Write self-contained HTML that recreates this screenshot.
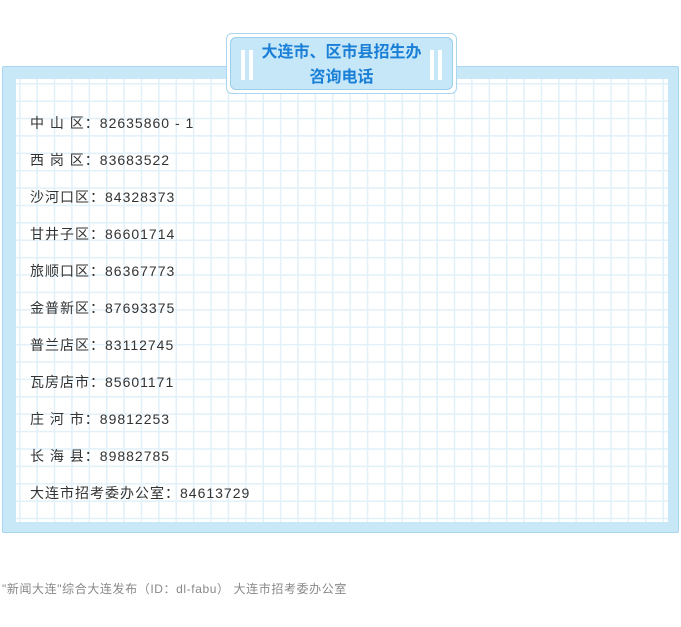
<!DOCTYPE html>
<html><head><meta charset="utf-8"><style>
body{margin:0;width:681px;height:627px;background:#fff;position:relative;font-family:"Liberation Sans","Noto Sans CJK SC",sans-serif;overflow:hidden}
.outer{position:absolute;left:2px;top:66px;width:675px;height:465px;background:#c8e8f8;border:1px solid #a9d6ee;border-radius:2px}
.grid{position:absolute;left:13px;top:12px;width:652px;height:443px;background-color:#fff;
background-image:linear-gradient(to right,#e1f0f9 1.5px,transparent 1.5px),linear-gradient(to bottom,#e1f0f9 1.5px,transparent 1.5px);
background-size:17.4px 17.4px;background-position:3px 4px}
.t1{position:absolute;left:226px;top:33px;width:229px;height:59px;border:1px solid #a9d6ee;border-radius:6px;background:#fff}
.t2{position:absolute;left:230px;top:37px;width:223px;height:53px;border:1px solid #9ccfe9;border-radius:6px;background:#c5e7f8;box-sizing:border-box;text-align:center;color:#1a7fd6;font-weight:bold;font-size:16px;line-height:25px;padding-top:2px}
.bar{position:absolute;top:12px;width:4px;height:30px;background:#fff}
.line{position:absolute;left:30px;font-size:14px;color:#333;letter-spacing:1px}
.foot{position:absolute;left:2px;top:580px;font-size:12px;color:#888;letter-spacing:0.6px}
</style></head><body>
<div class="outer"><div class="grid"></div></div>
<div class="t1"></div>
<div class="t2">大连市、区市县招生办<br>咨询电话
<div class="bar" style="left:10px"></div><div class="bar" style="left:18px"></div>
<div class="bar" style="right:10px"></div><div class="bar" style="right:18px"></div></div>
<div class="line" style="top:113px">中 山 区：82635860 - 1</div>
<div class="line" style="top:150px">西 岗 区：83683522</div>
<div class="line" style="top:187px">沙河口区：84328373</div>
<div class="line" style="top:224px">甘井子区：86601714</div>
<div class="line" style="top:261px">旅顺口区：86367773</div>
<div class="line" style="top:298px">金普新区：87693375</div>
<div class="line" style="top:335px">普兰店区：83112745</div>
<div class="line" style="top:372px">瓦房店市：85601171</div>
<div class="line" style="top:409px">庄 河 市：89812253</div>
<div class="line" style="top:446px">长 海 县：89882785</div>
<div class="line" style="top:483px">大连市招考委办公室：84613729</div>
<div class="foot">"新闻大连"综合大连发布（ID：dl-fabu） 大连市招考委办公室</div>
</body></html>
